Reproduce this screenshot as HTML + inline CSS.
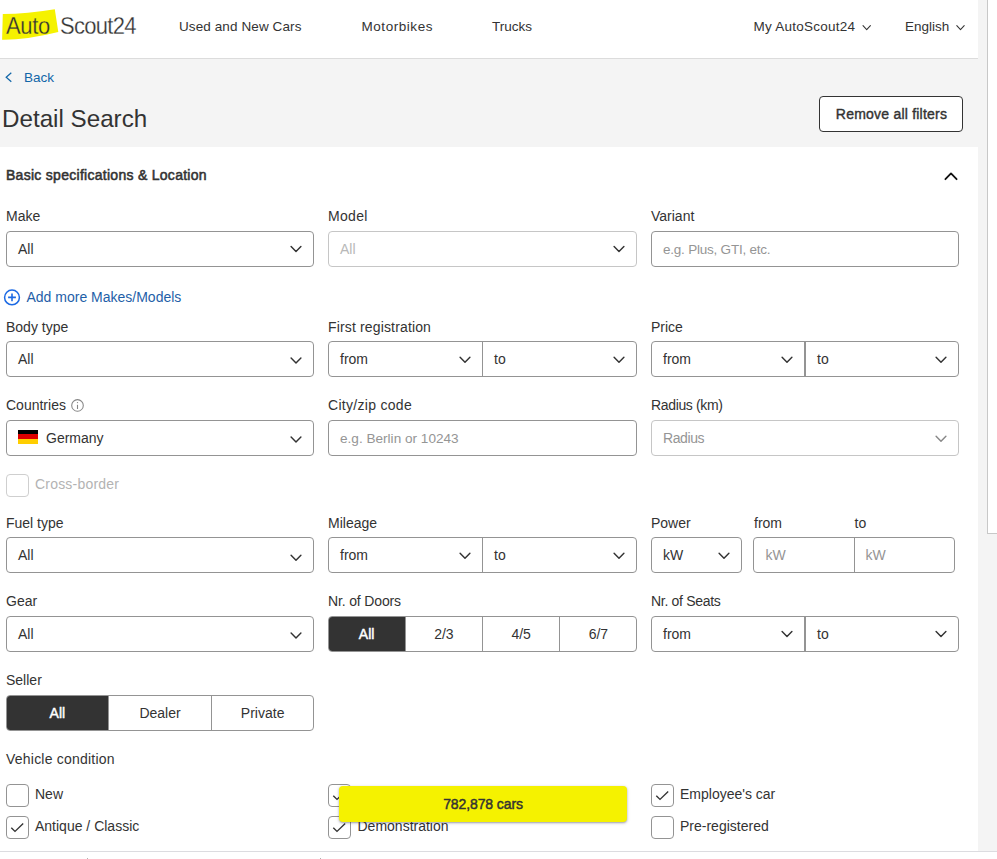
<!DOCTYPE html>
<html><head><meta charset="utf-8"><title>Detail Search</title>
<style>
html,body{margin:0;padding:0}
body{width:997px;height:859px;overflow:hidden;position:relative;background:#f4f4f4;font-family:"Liberation Sans", sans-serif;color:#333}
.t{position:absolute;white-space:nowrap}
.r{position:absolute;display:block}
</style></head><body>
<div class="r" style="left:0px;top:0px;width:978px;height:58px;background:#fff"></div>
<div class="r" style="left:0px;top:58px;width:978px;height:1px;background:#dcdcdc"></div>
<div class="r" style="left:987px;top:0px;width:10px;height:534px;box-sizing:border-box;background:#fff;border-left:1px solid #c8c8c8;border-bottom:1px solid #c8c8c8"></div>
<div class="r" style="left:0px;top:147px;width:978px;height:704px;background:#fff"></div>
<div class="r" style="left:0px;top:851px;width:997px;height:1px;background:#dcdce0"></div>
<div class="r" style="left:0px;top:852px;width:997px;height:7px;background:#fff"></div>
<div class="r" style="left:87px;top:858px;width:1px;height:1px;background:#b0b0b0"></div>
<div class="r" style="left:320px;top:858px;width:1px;height:1px;background:#b0b0b0"></div>
<svg class="r" style="left:0;top:0" width="140" height="50" viewBox="0 0 140 50"><path d="M2.8 14.1 Q27.2 13.75 54.8 9.2 L58.3 32 Q25.8 40.1 2.1 39.8 Z" fill="#f5f200"/></svg>
<div class="t" style="left:6px;top:15.70px;font-size:22px;line-height:22px;letter-spacing:-0.3px;-webkit-text-stroke:0.25px #f5f200;transform:scaleY(1.1);transform-origin:0 18px;">Auto</div>
<div class="t" style="left:60px;top:15.70px;font-size:22px;line-height:22px;letter-spacing:-0.7px;-webkit-text-stroke:0.25px #fff;transform:scaleY(1.1);transform-origin:0 18px;">Scout24</div>
<div class="t" style="left:179px;top:19.75px;font-size:13.5px;line-height:13.5px;letter-spacing:0.1px;">Used and New Cars</div>
<div class="t" style="left:361.5px;top:19.75px;font-size:13.5px;line-height:13.5px;letter-spacing:0.55px;">Motorbikes</div>
<div class="t" style="left:492px;top:19.75px;font-size:13.5px;line-height:13.5px;">Trucks</div>
<div class="t" style="left:753.5px;top:19.75px;font-size:13.5px;line-height:13.5px;letter-spacing:0.25px;">My AutoScout24</div>
<div class="t" style="left:905px;top:19.75px;font-size:13.5px;line-height:13.5px;">English</div>
<div class="t" style="left:24px;top:71.25px;font-size:13.5px;line-height:13.5px;color:#1166a8;">Back</div>
<div class="t" style="left:2px;top:107.40px;font-size:24.2px;line-height:24.2px;">Detail Search</div>
<div class="r" style="left:819px;top:96px;width:144px;height:36px;box-sizing:border-box;border:1px solid #333;border-radius:4px;background:#fff"></div>
<div class="t" style="left:741.50px;width:300px;text-align:center;top:107.00px;font-size:14px;line-height:14px;-webkit-text-stroke:0.4px #333;letter-spacing:0.22px;">Remove all filters</div>
<div class="t" style="left:6px;top:168.00px;font-size:14px;line-height:14px;letter-spacing:0.28px;-webkit-text-stroke:0.55px #333;">Basic specifications &amp; Location</div>
<div class="t" style="left:6px;top:209.00px;font-size:14px;line-height:14px;">Make</div>
<div class="t" style="left:328px;top:209.00px;font-size:14px;line-height:14px;letter-spacing:0.3px;">Model</div>
<div class="t" style="left:651px;top:209.00px;font-size:14px;line-height:14px;">Variant</div>
<div class="r" style="left:6px;top:231px;width:308px;height:36px;box-sizing:border-box;border:1px solid #949494;border-radius:4px;background:#fff"></div>
<div class="t" style="left:18px;top:242.00px;font-size:14px;line-height:14px;">All</div>
<div class="r" style="left:328px;top:231px;width:309px;height:36px;box-sizing:border-box;border:1px solid #c6c6c6;border-radius:4px;background:#fff"></div>
<div class="t" style="left:340px;top:242.00px;font-size:14px;line-height:14px;color:#b8b8b8;">All</div>
<div class="r" style="left:651px;top:231px;width:308px;height:36px;box-sizing:border-box;border:1px solid #949494;border-radius:4px;background:#fff"></div>
<div class="t" style="left:663px;top:242.75px;font-size:13.5px;line-height:13.5px;color:#959595;letter-spacing:-0.22px;">e.g. Plus, GTI, etc.</div>
<div class="t" style="left:26.5px;top:290.00px;font-size:14px;line-height:14px;color:#1f5fa8;">Add more Makes/Models</div>
<div class="t" style="left:6px;top:320.00px;font-size:14px;line-height:14px;">Body type</div>
<div class="t" style="left:328px;top:320.00px;font-size:14px;line-height:14px;letter-spacing:0.15px;">First registration</div>
<div class="t" style="left:651px;top:320.00px;font-size:14px;line-height:14px;">Price</div>
<div class="r" style="left:6px;top:341px;width:308px;height:36px;box-sizing:border-box;border:1px solid #949494;border-radius:4px;background:#fff"></div>
<div class="t" style="left:18px;top:352.00px;font-size:14px;line-height:14px;">All</div>
<div class="r" style="left:328px;top:341px;width:309px;height:36px;box-sizing:border-box;border:1px solid #949494;border-radius:4px;background:#fff"></div>
<div class="r" style="left:482px;top:341px;width:1px;height:36px;background:#949494"></div>
<div class="t" style="left:340px;top:352.00px;font-size:14px;line-height:14px;">from</div>
<div class="t" style="left:494px;top:352.00px;font-size:14px;line-height:14px;">to</div>
<div class="r" style="left:651px;top:341px;width:308px;height:36px;box-sizing:border-box;border:1px solid #949494;border-radius:4px;background:#fff"></div>
<div class="r" style="left:804px;top:341px;width:2px;height:36px;background:#949494"></div>
<div class="t" style="left:663px;top:352.00px;font-size:14px;line-height:14px;">from</div>
<div class="t" style="left:817px;top:352.00px;font-size:14px;line-height:14px;">to</div>
<div class="t" style="left:6px;top:398.00px;font-size:14px;line-height:14px;">Countries</div>
<div class="t" style="left:328px;top:398.00px;font-size:14px;line-height:14px;letter-spacing:0.3px;">City/zip code</div>
<div class="t" style="left:651px;top:398.00px;font-size:14px;line-height:14px;letter-spacing:-0.35px;">Radius (km)</div>
<div class="r" style="left:6px;top:420px;width:308px;height:36px;box-sizing:border-box;border:1px solid #949494;border-radius:4px;background:#fff"></div>
<div class="r" style="left:18px;top:430px;width:20px;height:4px;background:#000"></div>
<div class="r" style="left:18px;top:434px;width:20px;height:5px;background:#dd0000"></div>
<div class="r" style="left:18px;top:439px;width:20px;height:5px;background:#ffce00"></div>
<div class="t" style="left:46px;top:430.50px;font-size:14px;line-height:14px;">Germany</div>
<div class="r" style="left:328px;top:420px;width:309px;height:36px;box-sizing:border-box;border:1px solid #949494;border-radius:4px;background:#fff"></div>
<div class="t" style="left:340px;top:431.70px;font-size:13.6px;line-height:13.6px;color:#959595;">e.g. Berlin or 10243</div>
<div class="r" style="left:651px;top:420px;width:308px;height:36px;box-sizing:border-box;border:1px solid #c6c6c6;border-radius:4px;background:#fff"></div>
<div class="t" style="left:663px;top:431.00px;font-size:14px;line-height:14px;color:#959595;letter-spacing:-0.4px;">Radius</div>
<div class="r" style="left:6px;top:474px;width:23px;height:23px;box-sizing:border-box;border:1px solid #cfcfcf;border-radius:4px;background:#fff"></div>
<div class="t" style="left:35px;top:477.00px;font-size:14px;line-height:14px;color:#b3b3b3;letter-spacing:0.2px;">Cross-border</div>
<div class="t" style="left:6px;top:516.00px;font-size:14px;line-height:14px;">Fuel type</div>
<div class="t" style="left:328px;top:516.00px;font-size:14px;line-height:14px;">Mileage</div>
<div class="t" style="left:651px;top:516.00px;font-size:14px;line-height:14px;">Power</div>
<div class="t" style="left:754px;top:516.00px;font-size:14px;line-height:14px;">from</div>
<div class="t" style="left:854.5px;top:516.00px;font-size:14px;line-height:14px;">to</div>
<div class="r" style="left:6px;top:537px;width:308px;height:36px;box-sizing:border-box;border:1px solid #949494;border-radius:4px;background:#fff"></div>
<div class="t" style="left:18px;top:548.00px;font-size:14px;line-height:14px;">All</div>
<div class="r" style="left:328px;top:537px;width:309px;height:36px;box-sizing:border-box;border:1px solid #949494;border-radius:4px;background:#fff"></div>
<div class="r" style="left:482px;top:537px;width:1px;height:36px;background:#949494"></div>
<div class="t" style="left:340px;top:548.00px;font-size:14px;line-height:14px;">from</div>
<div class="t" style="left:494px;top:548.00px;font-size:14px;line-height:14px;">to</div>
<div class="r" style="left:651px;top:537px;width:91px;height:36px;box-sizing:border-box;border:1px solid #949494;border-radius:4px;background:#fff"></div>
<div class="t" style="left:663px;top:548.00px;font-size:14px;line-height:14px;">kW</div>
<div class="r" style="left:753px;top:537px;width:202px;height:36px;box-sizing:border-box;border:1px solid #949494;border-radius:4px;background:#fff"></div>
<div class="r" style="left:854px;top:537px;width:1px;height:36px;background:#949494"></div>
<div class="t" style="left:765.5px;top:548.00px;font-size:14px;line-height:14px;color:#959595;">kW</div>
<div class="t" style="left:865.5px;top:548.00px;font-size:14px;line-height:14px;color:#959595;">kW</div>
<div class="t" style="left:6px;top:594.00px;font-size:14px;line-height:14px;">Gear</div>
<div class="t" style="left:328px;top:594.00px;font-size:14px;line-height:14px;letter-spacing:-0.15px;">Nr. of Doors</div>
<div class="t" style="left:651px;top:594.00px;font-size:14px;line-height:14px;letter-spacing:-0.3px;">Nr. of Seats</div>
<div class="r" style="left:6px;top:616px;width:308px;height:36px;box-sizing:border-box;border:1px solid #949494;border-radius:4px;background:#fff"></div>
<div class="t" style="left:18px;top:627.00px;font-size:14px;line-height:14px;">All</div>
<div class="r" style="left:328px;top:616px;width:309px;height:36px;box-sizing:border-box;border:1px solid #949494;border-radius:4px;background:#fff"></div>
<div class="r" style="left:329px;top:617px;width:76px;height:34px;background:#333;border-radius:3px 0 0 3px"></div>
<div class="t" style="left:216.62px;width:300px;text-align:center;top:627.00px;font-size:14px;line-height:14px;-webkit-text-stroke:0.45px #fff;color:#fff;">All</div>
<div class="r" style="left:405px;top:616px;width:1px;height:36px;background:#949494"></div>
<div class="t" style="left:293.88px;width:300px;text-align:center;top:627.00px;font-size:14px;line-height:14px;">2/3</div>
<div class="r" style="left:482px;top:616px;width:1px;height:36px;background:#949494"></div>
<div class="t" style="left:371.12px;width:300px;text-align:center;top:627.00px;font-size:14px;line-height:14px;">4/5</div>
<div class="r" style="left:559px;top:616px;width:1px;height:36px;background:#949494"></div>
<div class="t" style="left:448.38px;width:300px;text-align:center;top:627.00px;font-size:14px;line-height:14px;">6/7</div>
<div class="r" style="left:651px;top:616px;width:308px;height:36px;box-sizing:border-box;border:1px solid #949494;border-radius:4px;background:#fff"></div>
<div class="r" style="left:804px;top:616px;width:2px;height:36px;background:#949494"></div>
<div class="t" style="left:663px;top:627.00px;font-size:14px;line-height:14px;">from</div>
<div class="t" style="left:817px;top:627.00px;font-size:14px;line-height:14px;">to</div>
<div class="t" style="left:6px;top:673.00px;font-size:14px;line-height:14px;">Seller</div>
<div class="r" style="left:6px;top:695px;width:308px;height:36px;box-sizing:border-box;border:1px solid #949494;border-radius:4px;background:#fff"></div>
<div class="r" style="left:7px;top:696px;width:101px;height:34px;background:#333;border-radius:3px 0 0 3px"></div>
<div class="t" style="left:-92.67px;width:300px;text-align:center;top:706.00px;font-size:14px;line-height:14px;-webkit-text-stroke:0.45px #fff;color:#fff;">All</div>
<div class="r" style="left:108px;top:695px;width:1px;height:36px;background:#949494"></div>
<div class="t" style="left:10.00px;width:300px;text-align:center;top:706.00px;font-size:14px;line-height:14px;">Dealer</div>
<div class="r" style="left:211px;top:695px;width:1px;height:36px;background:#949494"></div>
<div class="t" style="left:112.67px;width:300px;text-align:center;top:706.00px;font-size:14px;line-height:14px;">Private</div>
<div class="t" style="left:6px;top:752.00px;font-size:14px;line-height:14px;letter-spacing:0.22px;">Vehicle condition</div>
<div class="r" style="left:6px;top:784px;width:23px;height:23px;box-sizing:border-box;border:1px solid #949494;border-radius:4px;background:#fff"></div>
<div class="t" style="left:35px;top:787.00px;font-size:14px;line-height:14px;">New</div>
<div class="r" style="left:6px;top:816px;width:23px;height:23px;box-sizing:border-box;border:1px solid #949494;border-radius:4px;background:#fff"></div>
<div class="t" style="left:35px;top:819.00px;font-size:14px;line-height:14px;">Antique / Classic</div>
<div class="r" style="left:328px;top:784px;width:23px;height:23px;box-sizing:border-box;border:1px solid #949494;border-radius:4px;background:#fff"></div>
<div class="t" style="left:357.5px;top:787.00px;font-size:14px;line-height:14px;">Used</div>
<div class="r" style="left:328px;top:816px;width:23px;height:23px;box-sizing:border-box;border:1px solid #949494;border-radius:4px;background:#fff"></div>
<div class="t" style="left:357.5px;top:819.00px;font-size:14px;line-height:14px;">Demonstration</div>
<div class="r" style="left:651px;top:784px;width:23px;height:23px;box-sizing:border-box;border:1px solid #949494;border-radius:4px;background:#fff"></div>
<div class="t" style="left:680px;top:787.00px;font-size:14px;line-height:14px;">Employee&#39;s car</div>
<div class="r" style="left:651px;top:816px;width:23px;height:23px;box-sizing:border-box;border:1px solid #949494;border-radius:4px;background:#fff"></div>
<div class="t" style="left:680px;top:819.00px;font-size:14px;line-height:14px;">Pre-registered</div>
<svg class="r" style="left:0;top:0" width="997" height="859" viewBox="0 0 997 859"><path d="M863.00 25.60 L866.70 29.60 L870.40 25.60" fill="none" stroke="#333" stroke-width="1.05" stroke-linecap="round" stroke-linejoin="round"/><path d="M956.80 25.60 L960.50 29.60 L964.20 25.60" fill="none" stroke="#333" stroke-width="1.05" stroke-linecap="round" stroke-linejoin="round"/><path d="M11.3 72.8 L6.2 77.3 L11.3 81.8" fill="none" stroke="#1166a8" stroke-width="1.25"/><path d="M945.40 179.20 L951.00 173.40 L956.60 179.20" fill="none" stroke="#111" stroke-width="1.8" stroke-linecap="round" stroke-linejoin="round"/><path d="M291.10 246.55 L296.00 251.45 L300.90 246.55" fill="none" stroke="#333" stroke-width="1.45" stroke-linecap="round" stroke-linejoin="round"/><path d="M614.10 246.55 L619.00 251.45 L623.90 246.55" fill="none" stroke="#333" stroke-width="1.45" stroke-linecap="round" stroke-linejoin="round"/><circle cx="12" cy="297.4" r="7.4" fill="none" stroke="#1c6ae4" stroke-width="1.5"/><path d="M12 293.5 V301.3 M8.1 297.4 H15.9" stroke="#1c6ae4" stroke-width="1.6"/><path d="M291.10 358.05 L296.00 362.95 L300.90 358.05" fill="none" stroke="#333" stroke-width="1.45" stroke-linecap="round" stroke-linejoin="round"/><path d="M460.10 357.25 L465.00 362.15 L469.90 357.25" fill="none" stroke="#333" stroke-width="1.45" stroke-linecap="round" stroke-linejoin="round"/><path d="M614.10 357.25 L619.00 362.15 L623.90 357.25" fill="none" stroke="#333" stroke-width="1.45" stroke-linecap="round" stroke-linejoin="round"/><path d="M782.10 357.25 L787.00 362.15 L791.90 357.25" fill="none" stroke="#333" stroke-width="1.45" stroke-linecap="round" stroke-linejoin="round"/><path d="M936.10 357.25 L941.00 362.15 L945.90 357.25" fill="none" stroke="#333" stroke-width="1.45" stroke-linecap="round" stroke-linejoin="round"/><circle cx="77.5" cy="405.4" r="5.8" fill="none" stroke="#858585" stroke-width="1.05"/><path d="M77.5 404.8 V409" stroke="#858585" stroke-width="1.1"/><circle cx="77.5" cy="402.6" r="0.7" fill="#858585"/><path d="M291.10 437.05 L296.00 441.95 L300.90 437.05" fill="none" stroke="#333" stroke-width="1.45" stroke-linecap="round" stroke-linejoin="round"/><path d="M936.10 436.25 L941.00 441.15 L945.90 436.25" fill="none" stroke="#888" stroke-width="1.45" stroke-linecap="round" stroke-linejoin="round"/><path d="M291.10 555.35 L296.00 560.25 L300.90 555.35" fill="none" stroke="#333" stroke-width="1.45" stroke-linecap="round" stroke-linejoin="round"/><path d="M460.10 553.25 L465.00 558.15 L469.90 553.25" fill="none" stroke="#333" stroke-width="1.45" stroke-linecap="round" stroke-linejoin="round"/><path d="M614.10 553.25 L619.00 558.15 L623.90 553.25" fill="none" stroke="#333" stroke-width="1.45" stroke-linecap="round" stroke-linejoin="round"/><path d="M719.10 553.25 L724.00 558.15 L728.90 553.25" fill="none" stroke="#333" stroke-width="1.45" stroke-linecap="round" stroke-linejoin="round"/><path d="M291.10 633.05 L296.00 637.95 L300.90 633.05" fill="none" stroke="#333" stroke-width="1.45" stroke-linecap="round" stroke-linejoin="round"/><path d="M782.10 631.55 L787.00 636.45 L791.90 631.55" fill="none" stroke="#333" stroke-width="1.45" stroke-linecap="round" stroke-linejoin="round"/><path d="M936.10 631.55 L941.00 636.45 L945.90 631.55" fill="none" stroke="#333" stroke-width="1.45" stroke-linecap="round" stroke-linejoin="round"/><path d="M11.3 827.8 L15 831.4 L23.2 823.6" fill="none" stroke="#333" stroke-width="1.4"/><path d="M333.3 795.8 L337 799.4 L345.2 791.6" fill="none" stroke="#333" stroke-width="1.4"/><path d="M333.3 827.8 L337 831.4 L345.2 823.6" fill="none" stroke="#333" stroke-width="1.4"/><path d="M656.3 795.8 L660 799.4 L668.2 791.6" fill="none" stroke="#333" stroke-width="1.4"/></svg>
<div class="r" style="left:339px;top:786px;width:288px;height:36px;background:#f5f200;border-radius:4px;box-shadow:0 1px 2px rgba(30,30,70,0.35),0 1px 4px rgba(0,0,0,0.12)"></div>
<div class="t" style="left:333.00px;width:300px;text-align:center;top:797.00px;font-size:14px;line-height:14px;-webkit-text-stroke:0.45px #333;letter-spacing:-0.1px;">782,878 cars</div>
</body></html>
